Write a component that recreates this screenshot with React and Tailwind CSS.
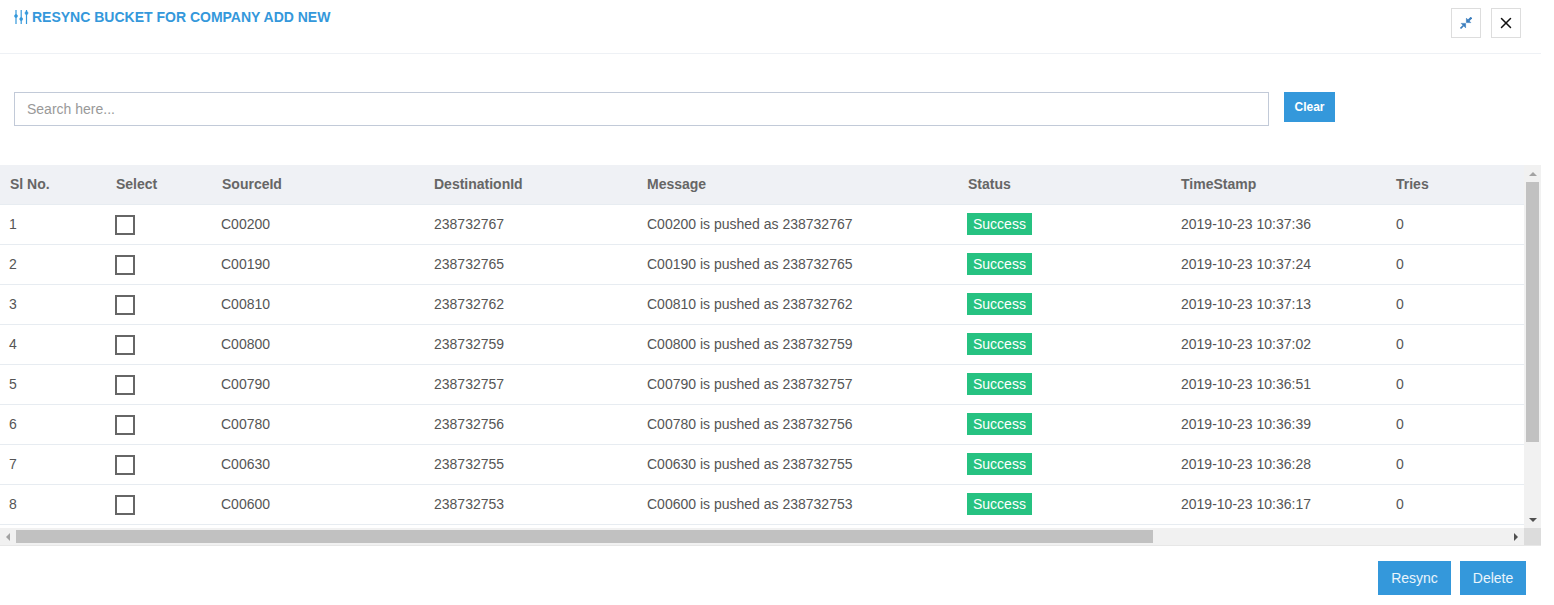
import { X } from 'lucide-react';

const rows = [
  ['1', 'C00200', '238732767', '2019-10-23 10:37:36'],
  ['2', 'C00190', '238732765', '2019-10-23 10:37:24'],
  ['3', 'C00810', '238732762', '2019-10-23 10:37:13'],
  ['4', 'C00800', '238732759', '2019-10-23 10:37:02'],
  ['5', 'C00790', '238732757', '2019-10-23 10:36:51'],
  ['6', 'C00780', '238732756', '2019-10-23 10:36:39'],
  ['7', 'C00630', '238732755', '2019-10-23 10:36:28'],
  ['8', 'C00600', '238732753', '2019-10-23 10:36:17'],
];

const headers = ['Sl No.', 'Select', 'SourceId', 'DestinationId', 'Message', 'Status', 'TimeStamp', 'Tries'];
const colW = ['w-[106px]', 'w-[106px]', 'w-[212px]', 'w-[213px]', 'w-[321px]', 'w-[213px]', 'w-[215px]', 'w-[138px]'];

const SlidersIcon = () => (
  <svg width="16" height="16" viewBox="0 0 16 16" fill="#3498db" stroke="#3498db">
    <path d="M2 1v14M7.2 1v14M12.5 1v14" strokeWidth="1.2" />
    <circle cx="2" cy="7" r="1.5" strokeWidth="0.6" />
    <circle cx="7.2" cy="10" r="1.5" strokeWidth="0.6" />
    <circle cx="12.5" cy="4" r="1.5" strokeWidth="0.6" />
  </svg>
);

const CompressIcon = () => (
  <svg width="12" height="12" viewBox="0 0 12 12" fill="#3a7dbd" stroke="#3a7dbd">
    <path d="M6.4 5.6V1.2L10.8 5.6z" strokeWidth="0.6" />
    <path d="M8.5 3.5l3-3" strokeWidth="2.2" />
    <path d="M5.6 6.4V10.8L1.2 6.4z" strokeWidth="0.6" />
    <path d="M3.5 8.5l-3 3" strokeWidth="1.6" />
  </svg>
);

const App = () => {
  return (
    <div className="w-[1541px] h-[605px] bg-white font-['Liberation_Sans',Arial,sans-serif] text-[14px] text-[#555]">
      <div className="h-[54px] border-b border-[#eef1f5] flex justify-between pl-[14px] pr-5">
        <h4 className="flex items-start pt-[9px] gap-[2px] text-[14px] leading-[16px] font-bold text-[#3498db]">
          <SlidersIcon />
          RESYNC BUCKET FOR COMPANY ADD NEW
        </h4>
        <div className="flex gap-[10px] pt-2">
          <button className="w-[30px] h-[30px] border border-[#ddd] flex items-center justify-center">
            <CompressIcon />
          </button>
          <button className="w-[30px] h-[30px] border border-[#ddd] flex items-center justify-center">
            <X size={18} color="#111" strokeWidth={2} />
          </button>
        </div>
      </div>

      <div className="flex items-start gap-[15px] pl-[14px] pt-[38px] h-[111px]">
        <input
          placeholder="Search here..."
          className="w-[1255px] h-[34px] border border-[#c2cad8] px-3 text-[14px] text-[#555] placeholder:text-[#999] outline-none"
        />
        <button className="w-[51px] h-[30px] bg-[#3498db] text-white text-[12px] font-bold">Clear</button>
      </div>

      <div className="flex h-[380px] border-b border-[#e7e7e7] box-content">
        <div className="w-[1524px] overflow-hidden">
          <table className="w-[1524px] table-fixed border-separate border-spacing-0">
            <thead>
              <tr className="h-10 text-left">
                {headers.map((h, i) => (
                  <th key={h} className={`${colW[i]} px-[10px] bg-[#eff1f5] border-b border-[#e7ecf1] font-bold text-[#666]`}>{h}</th>
                ))}
              </tr>
            </thead>
            <tbody>
              {rows.map((r) => (
                <tr key={r[0]} className="h-10">
                  <td className="pl-[9px] border-b border-[#e7ecf1]">{r[0]}</td>
                  <td className="px-[9px] border-b border-[#e7ecf1]">
                    <div className="w-5 h-5 mt-px border-2 border-[#666]" />
                  </td>
                  <td className="pl-[9px] border-b border-[#e7ecf1]">{r[1]}</td>
                  <td className="px-[10px] border-b border-[#e7ecf1]">{r[2]}</td>
                  <td className="px-[10px] border-b border-[#e7ecf1]">{r[1]} is pushed as {r[2]}</td>
                  <td className="pl-[9px] border-b border-[#e7ecf1]">
                    <span className="block w-fit h-[22px] -mt-px leading-[22px] px-[6px] bg-[#26c281] text-white">Success</span>
                  </td>
                  <td className="px-[10px] border-b border-[#e7ecf1]">{r[3]}</td>
                  <td className="px-[10px] border-b border-[#e7ecf1]">0</td>
                </tr>
              ))}
            </tbody>
          </table>
          <div className="mt-[3px] h-[17px] bg-[#f1f1f1] flex items-center">
            <div className="w-4 flex justify-center">
              <div className="border-y-[4px] border-y-transparent border-r-[4px] border-r-[#a3a3a3]" />
            </div>
            <div className="w-[1137px] h-[13px] bg-[#c1c1c1]" />
            <div className="flex-1 flex justify-end pr-[6px]">
              <div className="border-y-[4px] border-y-transparent border-l-[4px] border-l-[#505050]" />
            </div>
          </div>
        </div>
        <div className="w-[17px] flex flex-col">
          <div className="h-[17px] flex-none bg-[#f1f1f1] flex justify-center items-center">
            <div className="border-x-[4px] border-x-transparent border-b-[4px] border-b-[#a3a3a3]" />
          </div>
          <div className="flex-1 bg-[#f1f1f1] px-[2px]">
            <div className="h-[260px] bg-[#c1c1c1]" />
          </div>
          <div className="h-[17px] flex-none bg-[#f1f1f1] flex justify-center items-center">
            <div className="border-x-[4px] border-x-transparent border-t-[4px] border-t-[#505050]" />
          </div>
          <div className="h-[17px] flex-none bg-[#dcdcdc]" />
        </div>
      </div>

      <div className="flex justify-end gap-[9px] pt-[15px] pr-[15px]">
        <button className="w-[73px] h-[34px] bg-[#3498db] text-white/90">Resync</button>
        <button className="w-[66px] h-[34px] bg-[#3498db] text-white/90">Delete</button>
      </div>
    </div>
  );
};

export default App;
